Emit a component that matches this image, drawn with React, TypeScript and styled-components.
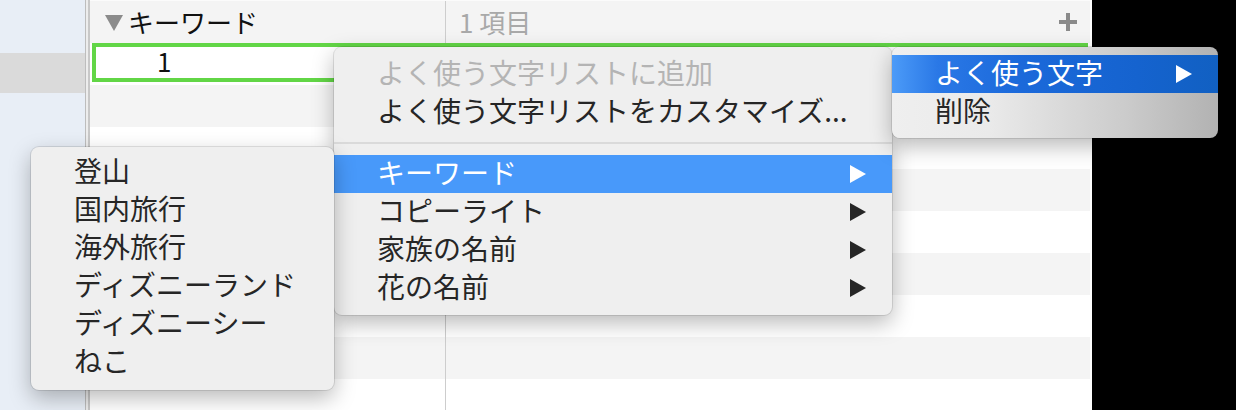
import styled, { createGlobalStyle } from "styled-components";

const GlobalStyle = createGlobalStyle`
  html, body {
    margin: 0;
    padding: 0;
    background: #000;
  }
  body {
    font-family: "Noto Sans CJK JP", "Noto Sans", sans-serif;
  }
`;

const Screen = styled.div`
  position: relative;
  width: 1236px;
  height: 410px;
  overflow: hidden;
  display: flex;
  background: #000;
`;

const Sidebar = styled.aside`
  width: 85px;
  flex-shrink: 0;
  padding-top: 53px;
  box-sizing: border-box;
  background: #e8eef6;
`;

const SidebarSelection = styled.div`
  height: 40px;
  background: #dadada;
`;

const Splitter = styled.div`
  width: 5px;
  flex-shrink: 0;
  box-sizing: border-box;
  border-left: 1px solid #bdbdbd;
  border-right: 2px solid #c8c8c8;
  background: #ededed;
`;

const Table = styled.section`
  width: 1002px;
  flex-shrink: 0;
  padding-right: 2px;
  box-sizing: border-box;
  display: flex;
  flex-direction: column;
  background: #fff;
`;

const Row = styled.div<{ $striped?: boolean; $height?: number }>`
  height: ${(p) => p.$height ?? 42}px;
  flex-shrink: 0;
  display: grid;
  grid-template-columns: 356px 1fr;
  background: ${(p) => (p.$striped ? "#f4f4f4" : "#fff")};
`;

const Cell = styled.div<{ $divider?: boolean }>`
  display: flex;
  align-items: center;
  box-sizing: border-box;
  border-right: ${(p) => (p.$divider ? "1px solid #cdcdcd" : "none")};
`;

const HeaderRow = styled(Row)`
  border-top: 1px solid #fbfbfb;
  box-sizing: border-box;
`;

const KeyCell = styled(Cell)`
  padding-left: 15px;
  gap: 5px;
  font-size: 26px;
  line-height: 1;
  color: #111;
`;

const Disclosure = styled.span`
  width: 0;
  height: 0;
  border-top: 16px solid #8b8b8b;
  border-left: 9px solid transparent;
  border-right: 9px solid transparent;
  margin-top: 2px;
`;

const CountCell = styled(Cell)`
  padding: 0 13px 0 13px;
  justify-content: space-between;
  font-size: 26px;
  line-height: 1;
  color: #a9a9a9;
`;

const EditRow = styled.div`
  height: 42px;
  flex-shrink: 0;
  padding: 0 2px 3px 2px;
  box-sizing: border-box;
  display: flex;
  background: #fff;
`;

const EditBox = styled.div`
  flex: 1;
  display: flex;
  align-items: center;
  padding: 0 0 3px 61px;
  border: 4px solid #62d646;
  background: #fff;
  font-size: 26px;
  line-height: 1;
  color: #111;
`;

const Menu = styled.div<{ $left: number; $top: number; $width: number }>`
  position: absolute;
  left: ${(p) => p.$left}px;
  top: ${(p) => p.$top}px;
  width: ${(p) => p.$width}px;
  padding: 8px 0;
  box-sizing: border-box;
  border-radius: 8px;
  background: #efefef;
  box-shadow: 0 0 0 1px rgba(0, 0, 0, 0.1), 0 8px 22px rgba(0, 0, 0, 0.28);
`;

const SubMenu = styled(Menu)`
  padding: 6px 0 9px;
`;

const ShadedMenu = styled(Menu)`
  padding: 8px 0 7px;
  background: linear-gradient(
    to right,
    #efefef 0%,
    #eaeaea 30%,
    #cbcbcb 72%,
    #b2b2b2 100%
  );
`;

const Item = styled.div<{ $active?: boolean; $disabled?: boolean; $vivid?: boolean }>`
  height: 38px;
  display: flex;
  align-items: center;
  padding: 0 26px 5px 43px;
  box-sizing: border-box;
  font-size: 28px;
  line-height: 1;
  white-space: nowrap;
  color: ${(p) => (p.$active ? "#fff" : p.$disabled ? "#b4b4b4" : "#262626")};
  background: ${(p) =>
    p.$vivid
      ? "linear-gradient(to right, #4c9bf8 0%, #2a78e6 14%, #1b69da 40%, #1563cf 75%, #1160c2 100%)"
      : p.$active
      ? "#4899fa"
      : "transparent"};
`;

const Arrow = styled.span`
  margin-left: auto;
  margin-top: 4px;
  width: 0;
  height: 0;
  border-left: 16px solid currentColor;
  border-top: 9px solid transparent;
  border-bottom: 9px solid transparent;
`;

const Separator = styled.div`
  height: 24px;
  display: flex;
  align-items: center;
  &::after {
    content: "";
    flex: 1;
    height: 2px;
    background: #dadada;
  }
`;

const stripes = [true, false, true, false, true, false, true, false];

const keywords = ["登山", "国内旅行", "海外旅行", "ディズニーランド", "ディズニーシー", "ねこ"];
const groups = ["キーワード", "コピーライト", "家族の名前", "花の名前"];

export default function App() {
  return (
    <>
      <GlobalStyle />
      <Screen>
        <Sidebar>
          <SidebarSelection />
        </Sidebar>
        <Splitter />
        <Table>
          <HeaderRow $striped $height={43}>
            <KeyCell $divider>
              <Disclosure />
              <span>キーワード</span>
            </KeyCell>
            <CountCell>
              <span>1 項目</span>
              <svg width="18" height="18" viewBox="0 0 18 18">
                <rect x="7" y="0" width="4" height="18" fill="#8a8a8a" />
                <rect x="0" y="7" width="18" height="4" fill="#8a8a8a" />
              </svg>
            </CountCell>
          </HeaderRow>
          <EditRow>
            <EditBox>1</EditBox>
          </EditRow>
          {stripes.map((s, i) => (
            <Row key={i} $striped={s}>
              <Cell $divider />
              <Cell />
            </Row>
          ))}
        </Table>

        <Menu $left={334} $top={47} $width={558}>
          <Item $disabled>よく使う文字リストに追加</Item>
          <Item>よく使う文字リストをカスタマイズ...</Item>
          <Separator />
          {groups.map((g, i) => (
            <Item key={g} $active={i === 0}>
              {g}
              <Arrow />
            </Item>
          ))}
        </Menu>

        <SubMenu $left={31} $top={147} $width={303}>
          {keywords.map((k) => (
            <Item key={k}>{k}</Item>
          ))}
        </SubMenu>

        <ShadedMenu $left={892} $top={47} $width={326}>
          <Item $active $vivid>
            よく使う文字
            <Arrow />
          </Item>
          <Item>削除</Item>
        </ShadedMenu>
      </Screen>
    </>
  );
}
